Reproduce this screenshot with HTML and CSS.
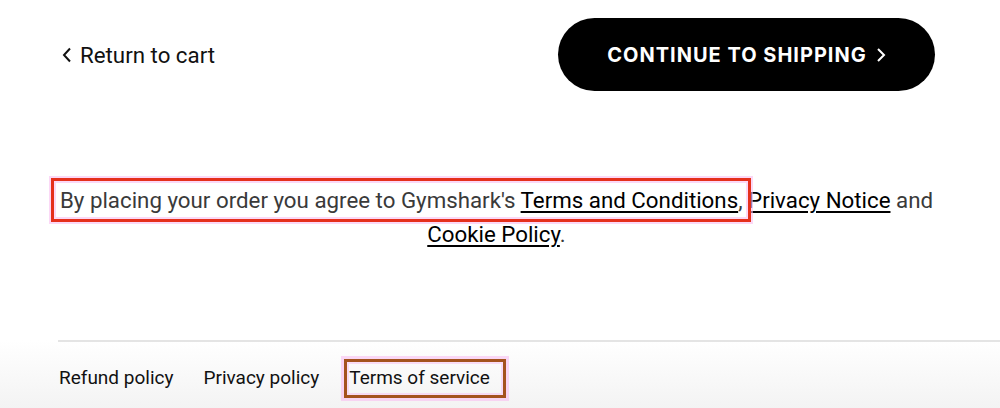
FILE: index.html
```html
<!DOCTYPE html>
<html lang="en">
<head>
<meta charset="utf-8">
<title>Checkout</title>
<link rel="stylesheet" href="styles.css">
</head>
<body>
<main class="page">
  <div class="nav-row">
    <a class="back-link" href="#">
      <svg class="chev-left" width="10" height="16" viewBox="0 0 10 16" aria-hidden="true"><path d="M8 1.5 L2 8 L8 14.5" fill="none" stroke="#111" stroke-width="2"/></svg>
      <span>Return to cart</span>
    </a>
    <a class="continue-btn" href="#">
      <span>CONTINUE TO SHIPPING</span>
      <svg class="chev-right" width="10" height="16" viewBox="0 0 10 16" aria-hidden="true"><path d="M2 2 L8 8 L2 14" fill="none" stroke="#fff" stroke-width="2"/></svg>
    </a>
  </div>
  <p class="agree"><span class="hl-red">By placing your order you agree to Gymshark's <a href="#">Terms and Conditions</a>,</span> <a href="#">Privacy Notice</a> and <a href="#">Cookie Policy</a>.</p>
</main>
<footer class="footer">
  <nav class="footer-links">
    <a href="#">Refund policy</a>
    <a href="#">Privacy policy</a>
    <a href="#" class="hl-brown">Terms of service</a>
  </nav>
</footer>
</body>
</html>
```
FILE: styles.css
```css
* { box-sizing: border-box; }
html, body { margin: 0; padding: 0; background: #fff; }
body {
  font-family: Roboto, "Liberation Sans", Arial, sans-serif;
  color: #111;
  width: 1000px;
  height: 408px;
  overflow: hidden;
  display: flex;
  flex-direction: column;
}
a { color: inherit; text-decoration: none; }

.page {
  padding: 18px 65px 0 58px;
}

.nav-row {
  display: flex;
  justify-content: space-between;
  align-items: center;
}

.back-link {
  display: flex;
  align-items: center;
  gap: 8px;
  font-size: 22.3px;
  color: #111;
  margin-left: 4px;
}

.continue-btn {
  height: 73px;
  width: 377px;
  border-radius: 37px;
  background: #000;
  color: #fff;
  display: flex;
  align-items: center;
  justify-content: center;
  gap: 9px;
  font-family: Inter, "Open Sans", sans-serif;
  font-weight: 700;
  font-size: 20px;
  letter-spacing: 1px;
}

.agree {
  margin: 92px 0 0;
  text-align: center;
  font-size: 22.3px;
  line-height: 34px;
  color: #3a3a3a;
}
.agree a {
  color: #000;
  text-decoration: underline;
  text-underline-offset: 3px;
}

.hl-red {
  position: relative;
}
.hl-red::after {
  content: "";
  position: absolute;
  left: -9px;
  right: -8px;
  top: -9px;
  bottom: -9px;
  border: 3px solid #e5301c;
  box-shadow: 0 0 0 2px rgba(248, 190, 240, 0.6), inset 0 0 0 2px rgba(248, 190, 240, 0.6);
  pointer-events: none;
}

.footer {
  margin-top: auto;
  height: 68px;
  background: linear-gradient(#fff, #f3f3f3);
}
.footer-links {
  margin-left: 58px;
  border-top: 2px solid #e4e4e4;
  height: 100%;
  display: flex;
  align-items: center;
  gap: 30px;
  padding-left: 1px;
  padding-top: 4px;
  font-size: 19px;
  color: #111;
}
.hl-brown {
  position: relative;
}
.hl-brown::after {
  content: "";
  position: absolute;
  left: -5px;
  right: -16px;
  top: -7px;
  bottom: -9px;
  border: 3px solid #a4531d;
  box-shadow: 0 0 0 3px rgba(248, 190, 240, 0.6), inset 0 0 0 2px rgba(248, 190, 240, 0.5);
  pointer-events: none;
}
```
